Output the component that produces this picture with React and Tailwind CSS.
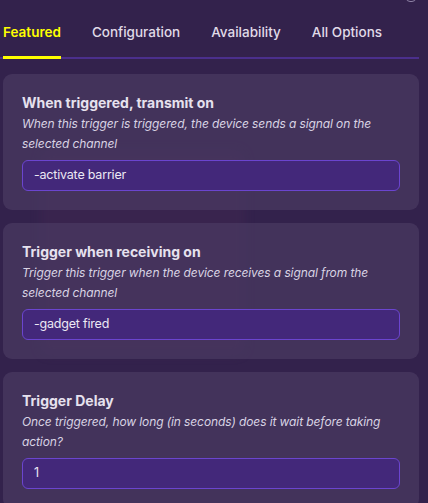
import React from "react";

const font = { fontFamily: "Inter, 'Noto Sans', sans-serif" };

function Card({ title, desc, value }) {
  return (
    <div className="rounded-[9px] bg-[#4a3a63]/70 px-[19px] pt-[19px] pb-[19px]">
      <div className="text-[14px] leading-[20px] font-bold text-[#e6e1ee]">{title}</div>
      <div className="mt-px text-[12px] leading-[20px] italic text-[#d9d3e4] tracking-[-0.1px]">{desc}</div>
      <div className="mt-[6px] h-[31px] rounded-[6px] border border-[#6b45cf] bg-[#43287a] px-[11px] flex items-center text-[12.5px] tracking-[-0.2px] text-[#ece8f4]">
        {value}
      </div>
    </div>
  );
}

export default function App() {
  return (
    <div style={font} className="relative w-[428px] h-[503px] overflow-hidden bg-[#33224c]">
      <div className="absolute left-[40px] top-[150px] w-[205px] h-[205px] rounded-[10px] bg-[#3d2650]/60 blur-[4px]" />
      <div className="absolute right-[12px] top-[-6px] w-[10px] h-[8px] rounded-sm border border-[#8d80a3]" />
      <div className="relative">
        <div className="flex gap-[31px] px-[3px] pt-[22px] border-b-2 border-[#4b2f8c] mr-[9px]">
          <div className="relative pb-[15px] text-[13.5px] leading-[20px] font-semibold text-[#ffff00]">
            Featured
            <div className="absolute left-0 right-0 bottom-[-2px] h-[3px] bg-[#ffff00]" />
          </div>
          <div className="pb-[15px] text-[13.5px] leading-[20px] font-medium text-[#e0dbe8]">Configuration</div>
          <div className="pb-[15px] text-[13.5px] leading-[20px] font-medium text-[#e0dbe8]">Availability</div>
          <div className="pb-[15px] text-[13.5px] leading-[20px] font-medium text-[#e0dbe8]">All Options</div>
        </div>
        <div className="flex flex-col gap-[13px] px-[3px] pr-[9px] pt-[15px]">
          <Card
            title="When triggered, transmit on"
            desc="When this trigger is triggered, the device sends a signal on the selected channel"
            value="-activate barrier"
          />
          <Card
            title="Trigger when receiving on"
            desc="Trigger this trigger when the device receives a signal from the selected channel"
            value="-gadget fired"
          />
          <Card
            title="Trigger Delay"
            desc="Once triggered, how long (in seconds) does it wait before taking action?"
            value="1"
          />
        </div>
      </div>
    </div>
  );
}
